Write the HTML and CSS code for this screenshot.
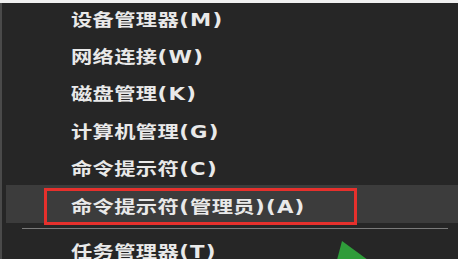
FILE: index.html
```html
<!DOCTYPE html>
<html lang="zh-CN">
<head>
<meta charset="utf-8">
<title>菜单</title>
<link rel="stylesheet" href="styles.css">
</head>
<body>
<div class="screen">
  <div class="topbar"></div>
  <div class="menu">
    <div class="item first"><span class="label">设备管理器<span class="lat">(M)</span></span></div>
    <div class="item"><span class="label">网络连接<span class="lat">(W)</span></span></div>
    <div class="item"><span class="label">磁盘管理<span class="lat">(K)</span></span></div>
    <div class="item"><span class="label">计算机管理<span class="lat">(G)</span></span></div>
    <div class="item"><span class="label">命令提示符<span class="lat">(C)</span></span></div>
    <div class="item active"><span class="label">命令提示符<span class="lat">(</span>管理员<span class="lat">)(A)</span></span></div>
    <div class="sep"></div>
    <div class="item last"><span class="label">任务管理器<span class="lat">(T)</span></span></div>
  </div>
  <div class="annot"></div>
  <svg class="pointer" width="44" height="24" viewBox="0 0 44 24">
    <polygon points="7,24 12,5 38,24" fill="#2f9c3a"/>
  </svg>
</div>
</body>
</html>
```
FILE: styles.css
```css
html, body {
  margin: 0;
  padding: 0;
  background: #262626;
}
.screen {
  position: relative;
  width: 458px;
  height: 259px;
  overflow: hidden;
  background: #262626;
}
.topbar {
  height: 3px;
  background: #f0f0f0;
}
.menu {
  height: 256px;
  border-left: 2px solid #4a4a4a;
  box-sizing: border-box;
}
.item {
  height: 37.5px;
  box-sizing: border-box;
  padding-top: 5px;
  padding-left: 69px;
  display: flex;
  align-items: center;
}
.item.first {
  height: 32px;
  padding-top: 0;
}
.item.active {
  margin-left: 4px;
  padding-left: 65px;
  background: #3c3c3c;
}
.item.last {
  padding-top: 9px;
}
.label {
  display: inline-block;
  white-space: nowrap;
  color: #e9e9e9;
  font-family: "Noto Sans CJK SC", "Noto Sans", sans-serif;
  font-weight: 600;
  font-size: 17px;
  line-height: 20px;
  letter-spacing: 0.3px;
  transform: scaleX(1.25);
  transform-origin: left center;
}
.lat {
  font-family: "DejaVu Sans", "Noto Sans CJK SC", sans-serif;
  font-weight: bold;
  font-size: 17px;
  letter-spacing: 1px;
}
.sep {
  height: 1px;
  margin: 5px 10px 0 20px;
  background: #7a7a7a;
}
.annot {
  position: absolute;
  left: 44px;
  top: 188px;
  width: 313px;
  height: 37px;
  box-sizing: border-box;
  border: 3px solid #e6302c;
}
.pointer {
  position: absolute;
  left: 330px;
  top: 236px;
}
```
